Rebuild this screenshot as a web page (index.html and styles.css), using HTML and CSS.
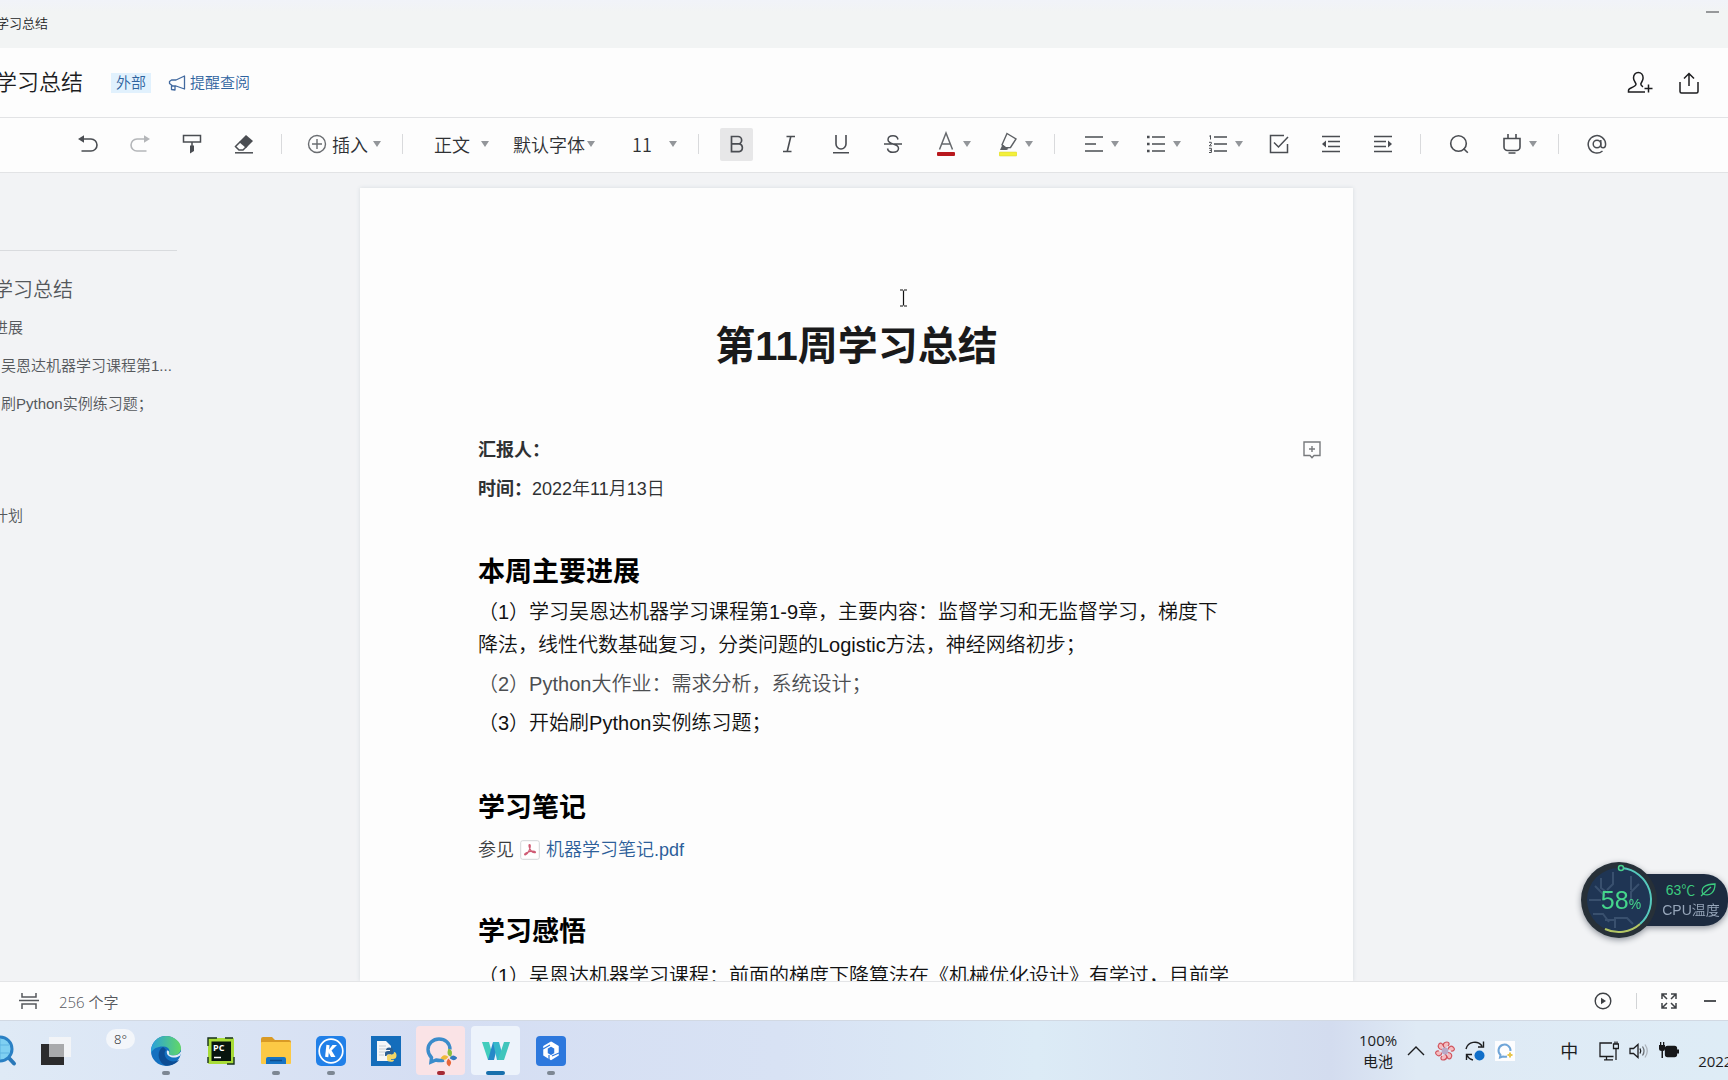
FILE: index.html
```html
<!DOCTYPE html>
<html lang="zh-CN">
<head>
<meta charset="utf-8">
<title>第11周学习总结</title>
<link rel="stylesheet" href="styles.css">
</head>
<body>
<svg class="defs" aria-hidden="true">
  <symbol id="caret" viewBox="0 0 8 6"><path d="M0 0h8L4 6z" fill="#93969a"/></symbol>
</svg>

<div class="titlebar">
  <span class="titlebar-text">学习总结</span>
  <button class="minimize" aria-label="最小化"></button>
</div>

<header class="header">
  <h1 class="doc-name">学习总结</h1>
  <span class="badge">外部</span>
  <button class="remind">
    <svg width="18" height="18" viewBox="0 0 18 18" fill="none" stroke="#41699f" stroke-width="1.3" stroke-linejoin="round"><path d="M16.500 2v13L8 12H4.500L3.500 11l-2-1.500V7.500L3.500 6H8zM3.500 11v4.500l3.500.5v-4"/></svg>
    <span>提醒查阅</span>
  </button>
  <div class="header-actions">
    <button class="action" aria-label="添加成员">
      <svg width="26" height="24" viewBox="0 0 26 24" fill="none" stroke="#1c1d1f" stroke-width="1.500"><path d="M18 21H1.500v-1.500c0-1.500 1-2 3-2.800 3-1.200 4.500-2 4.500-3.700 0-1-2.500-3-2.500-6 0-3.300 2-5.500 4.800-5.500s4.800 2.200 4.800 5.500c0 3-2.300 5-2.300 6 0 1.200.8 2 2.200 2.800M21.500 13.500v8M17.500 17.500h8"/></svg>
    </button>
    <button class="action" aria-label="分享">
      <svg width="22" height="24" viewBox="0 0 22 24" fill="none" stroke="#1c1d1f" stroke-width="1.500"><path d="M2 11v9.500c0 1 .7 1.500 1.500 1.500h15c.8 0 1.500-.5 1.500-1.500V11M11 15V3M6 7.500l5-5 5 5"/></svg>
    </button>
  </div>
</header>

<div class="toolbar" role="toolbar">
  <div class="group">
    <button class="tool" aria-label="撤销"><svg width="20" height="18" viewBox="0 0 20 18" fill="none" stroke="#4a4d52" stroke-width="1.600"><path d="M4 4h9a6 6 0 0 1 0 12H3.500"/><path d="M0 4l6-3.800v7.600z" fill="#4a4d52" stroke="none"/></svg></button>
    <button class="tool" aria-label="重做"><svg width="20" height="18" viewBox="0 0 20 18" fill="none" stroke="#b4b6b9" stroke-width="1.600"><path d="M16 4H7a6 6 0 0 0 0 12h9.500"/><path d="M20 4l-6-3.800v7.600z" fill="#b4b6b9" stroke="none"/></svg></button>
    <button class="tool" aria-label="格式刷"><svg width="20" height="20" viewBox="0 0 20 20" fill="none" stroke="#4a4d52" stroke-width="1.500"><path d="M1.500 1.500h17v6.500h-17zM10 8v4"/><path d="M8 11.500h4V17l-4 2.500z" fill="#4a4d52" stroke="none"/></svg></button>
    <button class="tool" aria-label="清除格式"><svg width="20" height="20" viewBox="0 0 20 20" fill="none" stroke="#4a4d52" stroke-width="1.500"><path d="M6 8l-4.500 4.500 3.500 3.500h4l4-4"/><path d="M12 1l7 6-7 7-7-6z" fill="#4a4d52" stroke="none"/><path d="M1 18.800h18"/></svg></button>
  </div>
  <span class="sep"></span>
  <div class="group">
    <button class="drop drop-text"><svg width="20" height="20" viewBox="0 0 20 20" fill="none" stroke="#6a6d71" stroke-width="1.400"><circle cx="10" cy="10" r="8.500"/><path d="M10 5v10M5 10h10"/></svg><span>插入</span><svg width="8" height="6"><use href="#caret"/></svg></button>
  </div>
  <span class="sep"></span>
  <div class="group fields">
    <label class="field field-style"><select aria-label="段落样式"><option>正文</option></select><svg width="8" height="6"><use href="#caret"/></svg></label>
    <label class="field field-font"><select aria-label="字体"><option>默认字体</option></select><svg width="8" height="6"><use href="#caret"/></svg></label>
    <label class="field field-size"><select aria-label="字号"><option>11</option></select><svg width="8" height="6"><use href="#caret"/></svg></label>
  </div>
  <span class="sep"></span>
  <div class="group">
    <button class="tool tool-on" aria-label="加粗" aria-pressed="true"><svg width="20" height="20" viewBox="0 0 20 20" fill="none" stroke="#4a4d52" stroke-width="1.700"><path d="M4.500 2.500h6.500a3.500 3.500 0 0 1 0 7.300H4.500zM4.500 9.800h7.500a4 4 0 0 1 0 7.900H4.500z"/></svg></button>
    <button class="tool" aria-label="斜体"><svg width="20" height="20" viewBox="0 0 20 20" fill="none" stroke="#4a4d52" stroke-width="1.600"><path d="M7.500 2.500H16M4 17.500h8.500M11.800 2.500l-3.600 15"/></svg></button>
    <button class="tool" aria-label="下划线"><svg width="20" height="20" viewBox="0 0 20 20" fill="none" stroke="#4a4d52" stroke-width="1.600"><path d="M5 1v9a5 5 0 0 0 10 0V1M2 18.800h16"/></svg></button>
    <button class="tool" aria-label="删除线"><svg width="20" height="20" viewBox="0 0 20 20" fill="none" stroke="#4a4d52" stroke-width="1.500"><path d="M15 5.500C14.500 3 12.500 1.800 10 1.800c-3 0-5 1.500-5 4 0 2.200 2 3.200 5 4.200 3.500 1 5.500 2 5.500 4.300 0 2.500-2.300 4-5.500 4-3 0-5-1.300-5.500-3.800M1 10h18"/></svg></button>
    <button class="drop" aria-label="文字颜色"><svg width="18" height="26" viewBox="0 0 18 26" fill="none"><path d="M2.500 18.500L9 2l6.500 16.500M5 13h8" stroke="#66696d" stroke-width="1.500"/><rect y="21" width="18" height="4" rx="1" fill="#b8181d"/></svg><svg width="8" height="6"><use href="#caret"/></svg></button>
    <button class="drop" aria-label="突出显示"><svg width="18" height="26" viewBox="0 0 18 26" fill="none"><path d="M8 2.500l9 5.500-5.500 8.500-5 .3-3.500-3z" stroke="#5d6064" stroke-width="1.400"/><path d="M3.500 13.500l6 4.500-2 1H1z" fill="#5d6064"/><rect y="21" width="18" height="4" rx="1" fill="#f3f03a" stroke="#d6d030" stroke-width=".5"/></svg><svg width="8" height="6"><use href="#caret"/></svg></button>
  </div>
  <span class="sep"></span>
  <div class="group">
    <button class="drop" aria-label="对齐"><svg width="18" height="18" viewBox="0 0 18 18" stroke="#4a4d52" stroke-width="1.600"><path d="M0 2h18M0 9h11M0 16h18"/></svg><svg width="8" height="6"><use href="#caret"/></svg></button>
    <button class="drop" aria-label="项目符号"><svg width="18" height="18" viewBox="0 0 18 18" stroke="#4a4d52" stroke-width="1.600"><path d="M5 2h13M5 9h13M5 16h13"/><path d="M0 2h2.600M0 9h2.600M0 16h2.600" stroke-width="2.600"/></svg><svg width="8" height="6"><use href="#caret"/></svg></button>
    <button class="drop" aria-label="编号"><svg width="18" height="18" viewBox="0 0 18 18" fill="none" stroke="#4a4d52" stroke-width="1.600"><path d="M5 2h13M5 9h13M5 16h13"/><path d="M.3 1.200l1.200-.7v4M0 7.300h2.300v1.500L.2 10.800h2.600M0 13.300h2.400v4.200H0M.6 15.400h1.800" stroke-width="1"/></svg><svg width="8" height="6"><use href="#caret"/></svg></button>
    <button class="tool" aria-label="待办"><svg width="20" height="20" viewBox="0 0 20 20" fill="none" stroke="#4a4d52" stroke-width="1.500"><path d="M15 1.500H1.500v17h17V10M5 8.500l4.500 4.500L19 3"/></svg></button>
    <button class="tool" aria-label="减少缩进"><svg width="20" height="20" viewBox="0 0 20 20" stroke="#4a4d52" stroke-width="1.600"><path d="M1 2.500h18M7 7.500h12M7 12.500h12M1 17.500h18"/><path d="M5 6.500v7L1 10z" fill="#4a4d52" stroke="none"/></svg></button>
    <button class="tool" aria-label="增加缩进"><svg width="20" height="20" viewBox="0 0 20 20" stroke="#4a4d52" stroke-width="1.600"><path d="M1 2.500h18M1 7.500h12M1 12.500h12M1 17.500h18"/><path d="M15 6.500v7l4-3.500z" fill="#4a4d52" stroke="none"/></svg></button>
  </div>
  <span class="sep"></span>
  <div class="group">
    <button class="tool" aria-label="查找"><svg width="20" height="20" viewBox="0 0 20 20" fill="none" stroke="#4a4d52" stroke-width="1.600"><circle cx="9.500" cy="9.500" r="7.800"/><path d="M14.500 14.500l4.300 4.300"/></svg></button>
    <button class="drop" aria-label="插件"><svg width="18" height="22" viewBox="0 0 18 22" fill="none" stroke="#4a4d52" stroke-width="1.600"><path d="M1 5.500h16V14a3.500 3.500 0 0 1-3.500 3.500h-9A3.500 3.500 0 0 1 1 14zM5 1v4M13 1v4M5.500 20h7"/></svg><svg width="8" height="6"><use href="#caret"/></svg></button>
  </div>
  <span class="sep"></span>
  <div class="group">
    <button class="tool" aria-label="提及"><svg width="20" height="20" viewBox="0 0 20 20" fill="none" stroke="#4a4d52" stroke-width="1.500"><circle cx="10" cy="10" r="3.800"/><path d="M13.800 6v5.500c0 1.500 1 2.300 2.300 2.300 1.500 0 2.500-1.300 2.500-3.800A8.700 8.700 0 1 0 15.500 17"/></svg></button>
  </div>
</div>

<main class="workspace">
  <nav class="outline">
    <a class="outline-title" href="#top">学习总结</a>
    <a href="#progress">进展</a>
    <a class="outline-sub" href="#progress">吴恩达机器学习课程第1...</a>
    <a class="outline-sub" href="#progress">刷Python实例练习题；</a>
    <a class="outline-gap" href="#plan">计划</a>
  </nav>
  <article class="page" id="top">
    <h2 class="page-title">第11周学习总结</h2>
    <div class="meta">
      <p><b>汇报人：</b></p>
      <button class="comment" aria-label="添加评论"><svg width="18" height="18" viewBox="0 0 18 18" fill="none" stroke="#77797c" stroke-width="1.400"><path d="M1 1h16v13.500h-6L9 16.800l-2-2.300H1zM9 5v6M6 8h6"/></svg></button>
    </div>
    <p class="meta"><b>时间：</b>2022年11月13日</p>
    <h3 id="progress">本周主要进展</h3>
    <p class="body">（1）学习吴恩达机器学习课程第1-9章，主要内容：监督学习和无监督学习，梯度下降法，线性代数基础复习，分类问题的Logistic方法，神经网络初步；</p>
    <p class="body body-soft">（2）Python大作业：需求分析，系统设计；</p>
    <p class="body">（3）开始刷Python实例练习题；</p>
    <h3>学习笔记</h3>
    <p class="attach">参见<svg width="20" height="20" viewBox="0 0 20 20" fill="none"><rect x=".7" y=".7" width="18.600" height="18.600" rx="2" fill="#fff" stroke="#d3d5d8"/><path d="M9.500 4.500c1.200 0 .8 3 0 5-1 2.500-3 5-4.300 5.300-1.500 0 0-2 3-2.800 2.800-.8 6.500-.8 7.200 0 .6 1.200-2.500 1-4.200-1C9.500 9 8.300 4.500 9.500 4.500z" stroke="#cf5b74" stroke-width="1.200"/></svg><a href="#pdf">机器学习笔记.pdf</a></p>
    <h3>学习感悟</h3>
    <p class="body">（1）吴恩达机器学习课程：前面的梯度下降算法在《机械优化设计》有学过，目前学</p>
  </article>
</main>

<footer class="status">
  <svg width="20" height="18" viewBox="0 0 20 18" fill="none" stroke="#55585c" stroke-width="1.500"><path d="M3 1v4h14V1M0 8.500h20M3 17v-5h14v5"/></svg>
  <span class="count">256 个字</span>
  <div class="status-right">
    <button class="tiny" aria-label="演示"><svg width="18" height="18" viewBox="0 0 18 18" fill="none" stroke="#3e4145" stroke-width="1.400"><circle cx="9" cy="9" r="7.800"/><path d="M7 5.800v6.400l5-3.200z" fill="#3e4145" stroke="none"/></svg></button>
    <span class="status-sep"></span>
    <button class="tiny" aria-label="全屏"><svg width="16" height="16" viewBox="0 0 16 16" fill="none" stroke="#3e4145" stroke-width="1.500"><path d="M1 6V1h5M1 1l5 5M10 1h5v5M15 1l-5 5M1 10v5h5M1 15l5-5M15 10v5h-5M15 15l-5-5"/></svg></button>
    <button class="tiny" aria-label="缩小"><svg width="12" height="10" viewBox="0 0 12 10"><path d="M0 5h12" stroke="#3e4145" stroke-width="1.800"/></svg></button>
  </div>
</footer>

<div class="taskbar">
  <div class="apps">
    <button class="app app-cut" aria-label="搜索"><svg width="32" height="32" viewBox="0 0 32 32"><path d="M23 22l6 6.500" stroke="#2a78b8" stroke-width="4" stroke-linecap="round"/><circle cx="15" cy="14" r="12" fill="#7fd0f2" stroke="#2a80c4" stroke-width="3"/><path d="M15 4v20M6 10h18M6 18h18" stroke="#5fb4e2"/></svg></button>
    <button class="app" aria-label="任务视图"><svg width="32" height="32" viewBox="0 0 32 32"><rect x="1" y="9" width="23" height="21" fill="#2b2b2c"/><rect x="9" y="2" width="22" height="20" fill="#f3f4f6" opacity=".92"/><path d="M9 9h15v13H9z" fill="#a9aaac"/></svg></button>
    <button class="app weather"><span>8°</span></button>
    <button class="app running" aria-label="Edge"><svg width="32" height="32" viewBox="0 0 32 32"><defs><linearGradient id="eg" x1="0" x2="1"><stop offset="0" stop-color="#2aa0dc"/><stop offset="1" stop-color="#62d866"/></linearGradient></defs><circle cx="16" cy="16" r="15" fill="#1470c0"/><path d="M1 15C2 7 8 1 16 1s15 6 15 12c0 5-4 7.500-8 7.500-3 0-4.500-1-4-2.500 1.500-3-.5-6-5-6.500C9 11 3 13 1 18z" fill="url(#eg)"/><path d="M13 12c-6 3-6 13 1 18 5 2 12-1 15-5-4 2-9 2-12-1s-3-7-1-9c-1-1.500-2-2.500-3-3z" fill="#0d4d94"/><path d="M31 18c0 3-4 5-8 4.500-5-.5-7-4-6-7 1.500-.5 2.500 1 2 2.500-.5 1.500 1 2.500 4 2.500s6-1 8-4z" fill="#e4edf7"/></svg></button>
    <button class="app" aria-label="PyCharm"><svg width="28" height="28" viewBox="0 0 28 28"><rect x="1" y="1" width="26" height="26" rx="1" fill="#a8dc38"/><path d="M1 9V1h9M18 1h8M27 20v7h-7M1 20v6" fill="none" stroke="#16301b" stroke-width="1.400"/><rect x="4.500" y="4.500" width="19.500" height="19.500" fill="#08150e"/><text x="6" y="14" class="pc">PC</text><path d="M7 20.500h7" stroke="#fff" stroke-width="1.500"/></svg></button>
    <button class="app running" aria-label="文件资源管理器"><svg width="32" height="32" viewBox="0 0 32 32"><path d="M1 4q0-2 2-2h9l3 3h14q2 0 2 2v7H1z" fill="#d99a25"/><rect x="1" y="7" width="30" height="22" rx="1" fill="#fcc945"/><path d="M6 29v-5q0-2 2-2h16q2 0 2 2v5z" fill="#1673c4"/><path d="M10 25.500h12" stroke="#0c4c8c" stroke-width="1.500"/></svg></button>
    <button class="app running" aria-label="酷狗音乐"><svg width="30" height="30" viewBox="0 0 30 30"><rect width="30" height="30" rx="5" fill="#2180e8"/><circle cx="15" cy="15" r="11.800" fill="none" stroke="#fff" stroke-width="1.700"/><path d="M12 9l-1.300 12" fill="none" stroke="#fff" stroke-width="3.200"/><path d="M16.500 9H21l-5.500 5.500L19.500 21H15l-3-6z" fill="#fff"/></svg></button>
    <button class="app" aria-label="Python"><svg width="30" height="30" viewBox="0 0 30 30"><rect width="30" height="30" fill="#146dbb"/><path d="M6 5h9l5 5v15H6z" fill="#f4f6f8"/><path d="M8 10h7M8 13h7M8 16h6M8 19h5" stroke="#c6cdd4"/><path d="M14 20v-3q0-2 3-2h2v-1h-4q0-2.500 3-2.500 4 0 4 2.500v3q0 1.500-2 1.500h-3q-1.500 0-1.500 1.500z" fill="#2c5f93"/><path d="M16 20q0-1.500 1.500-1.500h3q2.500 0 2.500-2.500 2.500 0 2.500 3.500T22 23h-2v.8h3q0 2-3 2-4 0-4-2.500z" fill="#f4d565"/></svg></button>
    <button class="app app-alert running" aria-label="企业微信"><svg width="32" height="32" viewBox="0 0 32 32" fill="none"><path d="M25 14.500C25 8 20 4 14 4S3 8.500 3 14.500c0 3.500 1.500 6 3.500 8L6 27l5-2c3 .8 5.500.7 8 0" stroke="#3b8ccb" stroke-width="3.400"/><path d="M24 15q3 1 1.500 5.500-3-1-1.500-5.500z" fill="#8bbf3d" stroke="#8bbf3d" stroke-width="2"/><path d="M31 23q-2 2.500-5 0 2-3 5 0z" fill="#3279bd" stroke="#3279bd" stroke-width="2"/><path d="M24 30q-2.500-2-.5-5 3 2 .5 5z" fill="#e8663a" stroke="#e8663a" stroke-width="2"/><path d="M17 23q2-3 5-1-2 3-5 1z" fill="#efb93b" stroke="#efb93b" stroke-width="2"/></svg></button>
    <button class="app app-active running" aria-label="WPS文档"><svg width="30" height="22" viewBox="0 0 30 22"><path d="M1 2h7l5 18H7z" fill="#42cdbd"/><path d="M13 20L17.500 2h-5.500L7 20z" fill="#2688c8"/><path d="M12 2h6l5 18h-7z" fill="#36b7ca"/><path d="M23 20L29 2h-6l-6 18z" fill="#40c5bc"/></svg></button>
    <button class="app running" aria-label="钉盘"><svg width="30" height="30" viewBox="0 0 30 30"><rect width="30" height="30" rx="4" fill="#2d78dd"/><path d="M15 8l5.500 3.300v7L15 21.700l-5.500-3.400v-7z" fill="none" stroke="#fff" stroke-width="4.500"/><path d="M7 13l7-4M13 25v-6M16 20l7-3" stroke="#2d78dd" stroke-width="1.200"/></svg></button>
  </div>
  <div class="tray">
    <div class="battery"><span>100%</span><span>电池</span></div>
    <svg width="18" height="10" viewBox="0 0 18 10" fill="none" stroke="#1c1d1f" stroke-width="1.400"><path d="M1 9l8-8 8 8"/></svg>
    <svg width="20" height="20" viewBox="0 0 20 20" fill="none" stroke="#d0555f" stroke-width="1.200"><g id="petals"><path d="M10 7C7 5 8 1 12 1c2 0 3 2 1 4" fill="#f5bcc0"/><path d="M13 8.500C13.500 5 17 4 19 7c1 2-.5 3.500-3 3" fill="#f5bcc0"/><path d="M13 11.500c3 0 5 3 3 5.500-1.500 1.700-3.500.8-4-1.500" fill="#f5bcc0"/><path d="M10 13c3 2 2 6-2 6-2 0-3-2-1-4" fill="#f5bcc0"/><path d="M7 11.500C6.500 15 3 16 1 13c-1-2 .5-3.500 3-3" fill="#f5bcc0"/><path d="M7 8.500C4 8.500 2 5.500 4 3c1.500-1.700 3.500-.8 4 1.500" fill="#f5bcc0"/></g><circle cx="10" cy="10" r="3.400" fill="#b9a9c6" stroke="none"/></svg>
    <svg width="20" height="20" viewBox="0 0 20 20" fill="none" stroke="#1c1d1f" stroke-width="1.400"><path d="M1 8a9 9 0 0 1 16-3M18.500.5v5.500H13M1.500 19v-5.500H7M2 14.500a9 9 0 0 0 6 4.500"/><circle cx="14.500" cy="14.500" r="5" fill="#0f6ec9" stroke="none"/></svg>
    <svg width="20" height="20" viewBox="0 0 20 20" fill="none"><rect width="20" height="20" fill="#fdfdfe"/><path d="M15.500 10a6 6 0 1 0-10 4L5 16.500l3-1q2 .5 4 0" stroke="#6fa5d8" stroke-width="2"/><path d="M15 11.500v5M12.500 14h5" stroke="#e8c64e" stroke-width="2"/></svg>
    <span class="ime">中</span>
    <svg width="20" height="20" viewBox="0 0 20 20" fill="none" stroke="#1c1d1f" stroke-width="1.300"><path d="M13 2H1v13.500h13.500M5 18.800h9M7.500 15.500v3M17 8v11M14.500 3h5v4.500h-5zM16 .5V3M18 .5V3"/></svg>
    <svg width="20" height="18" viewBox="0 0 20 18" fill="none" stroke="#1c1d1f" stroke-width="1.300"><path d="M1 6.500h3.500L9 2.500v13l-4.500-4H1zM11 6.500q1.500 2.500 0 5"/><path d="M13.500 4.500q3 4.500 0 9" stroke="#6c7177"/><path d="M16 2.500q4.500 6.500 0 13" stroke="#adb4bc"/></svg>
    <svg width="20" height="18" viewBox="0 0 20 18"><path d="M0 3h6v4q0 2-2 2v7H2.500V9Q0 9 0 7zM1 0h1.300v3H1zM4 0h1.300v3H4z" fill="#17181a"/><rect x="6.500" y="4.500" width="11" height="10" rx="2" fill="#17181a" stroke="#17181a" stroke-width="1.300"/><path d="M19 7.500v4" stroke="#17181a" stroke-width="2"/></svg>
    <span class="date">2022</span>
  </div>
</div>

<svg class="cursor" width="9" height="18" viewBox="0 0 9 18" fill="none" stroke="#111" stroke-width="1.200"><path d="M1 1h3M5 1h3M1 17h3M5 17h3M4.500 1.500v15"/></svg>

<aside class="monitor">
  <div class="dial">
    <svg class="dial-art" width="76" height="76" viewBox="0 0 76 76" fill="none"><circle cx="38" cy="38" r="38" fill="#273038"/><circle cx="38" cy="38" r="32" fill="#1f3554"/><path d="M14 24l10 10M20 16v10l8 6M32 10v12l-6 6M50 14v14M58 22l-8 8v10M8 38h12M12 52h10l6 8M34 66v-10h12l6 6M24 58h10" stroke="#39506e" stroke-width="2"/><path d="M41 6a32 32 0 0 1 18 56" stroke="#56c9bd" stroke-width="2"/><path d="M59 62a32 32 0 0 1-35 5" stroke="#b3c664" stroke-width="2"/><circle cx="40" cy="6" r="2.500" fill="#1f3554" stroke="#49d28b" stroke-width="1.500"/></svg>
    <span class="load">58<small>%</small></span>
  </div>
  <div class="temp">
    <span class="degree">63℃ <svg width="16" height="14" viewBox="0 0 16 14" fill="none" stroke="#3ccb7f" stroke-width="1.300"><path d="M1 13L11 4M3 11C0 5 5 1 15 1c0 8-5 13-12 10z"/></svg></span>
    <span>CPU温度</span>
  </div>
</aside>
</body>
</html>
```
FILE: styles.css
```css
* { box-sizing: border-box; }

body {
  margin: 0;
  height: 100vh;
  display: flex;
  flex-direction: column;
  position: relative;
  overflow: hidden;
  background: #f2f3f5;
  color: #1c1d1f;
  font-family: "Liberation Sans", "Noto Sans CJK SC", sans-serif;
  font-weight: 350;
  font-size: 15px;
}

button, select {
  border: 0;
  padding: 0;
  background: none;
  color: inherit;
  font: inherit;
}

h1, h2, h3, p { margin: 0; }
b { font-weight: 700; }
a { color: inherit; text-decoration: none; }
svg { display: block; flex: none; }
.defs { position: absolute; width: 0; height: 0; }

/* Window title */
.titlebar {
  flex: none;
  height: 48px;
  display: flex;
  justify-content: space-between;
  align-items: center;
  padding-right: 9px;
  background: linear-gradient(#f1f3f9, #f2f4f4 12px);
}
.titlebar-text { margin-left: -4px; font-size: 13px; line-height: 20px; }
.minimize { width: 13px; height: 2px; margin-bottom: 24px; background: #96989a; }

/* Document header */
.header {
  flex: none;
  height: 70px;
  display: flex;
  align-items: center;
  background: #fdfdfd;
  border-bottom: 1px solid #e2e3e5;
}
.doc-name { margin-left: -5px; font-size: 22px; line-height: 32px; font-weight: 350; }
.badge {
  margin-left: 28px;
  padding: 0 5px;
  line-height: 20px;
  background: #e1f1fd;
  color: #2f639f;
}
.remind {
  display: flex;
  align-items: center;
  gap: 4px;
  margin-left: 17px;
  line-height: 20px;
  color: #2f639f;
}
.header-actions { display: flex; align-items: center; gap: 25px; margin-left: auto; padding-right: 28px; }

/* Toolbar */
.toolbar {
  flex: none;
  height: 55px;
  display: flex;
  align-items: center;
  padding: 0 0 2px 71px;
  background: #fdfdfd;
  border-bottom: 1px solid #e2e3e5;
  font-family: "Noto Sans CJK SC", sans-serif;
  font-size: 18px;
  color: #2f3134;
}
.group { display: flex; align-items: center; gap: 19px; }
.sep { flex: none; width: 1px; height: 20px; margin: 0 21px; background: #d9dadc; }
.tool {
  display: grid;
  place-items: center;
  width: 33px;
  height: 33px;
  border-radius: 2px;
}
.tool-on { background: #e7e7e8; }
.drop { display: flex; align-items: center; gap: 8px; padding-left: 9px; height: 33px; }
.drop-text { gap: 5px; padding-left: 4px; line-height: 28px; }
.fields { gap: 24px; padding-left: 10px; }
.field { display: flex; align-items: center; line-height: 28px; }
.field select { flex: 1; min-width: 0; appearance: none; }
.field-style { width: 55px; }
.field-font { width: 82px; }
.field-size { width: 58px; padding-left: 13px; }

/* Workspace */
.workspace {
  flex: 1;
  min-height: 0;
  display: grid;
  grid-template-columns: 360px 1fr 375px;
  overflow: hidden;
}
.outline {
  display: flex;
  flex-direction: column;
  align-items: flex-start;
  gap: 16px;
  width: 177px;
  margin-top: 77px;
  padding-top: 24px;
  border-top: 1px solid #d9dbde;
  color: #55585c;
  line-height: 22px;
  white-space: nowrap;
}
.outline a { margin-left: -7px; }
.outline .outline-title { margin-bottom: -4px; font-size: 20px; line-height: 30px; }
.outline .outline-sub { margin-left: 1px; }
.outline .outline-gap { margin-top: 74px; }

.page {
  margin-top: 15px;
  padding: 130px 118px 0;
  background: #fdfdfd;
  box-shadow: 0 0 4px #d5dadf;
  overflow: hidden;
}
.page-title {
  font-size: 40px;
  line-height: 56px;
  text-align: center;
  color: #1a1a1b;
  margin-bottom: 61px;
}
.meta {
  display: flex;
  justify-content: space-between;
  font-size: 18px;
  line-height: 30px;
  margin-bottom: 9px;
  color: #2f3133;
}
p.meta { justify-content: flex-start; }
.comment { margin-right: -86px; }
.page h3 {
  font-size: 27px;
  line-height: 40px;
  margin: 48px 0 4px;
  color: #000;
}
.body { font-size: 20px; line-height: 33px; margin-bottom: 6px; color: #111; }
.body-soft { color: #4c4e51; }
.attach { display: flex; align-items: center; gap: 6px; font-size: 18px; line-height: 36px; color: #3a3c3f; }
.attach a { color: #2d5f9a; }
.page .attach + h3 { margin: 44px 0 8px; }

/* Status bar */
.status {
  flex: none;
  height: 39px;
  display: flex;
  align-items: center;
  gap: 20px;
  padding: 0 9px 0 19px;
  border-top: 1px solid #e4e5e7;
  background: #fdfdfd;
  color: #55585c;
  font-family: "Open Sans", "Noto Sans CJK SC", sans-serif;
}
.status-right { display: flex; align-items: center; gap: 21px; margin-left: auto; }
.status-sep { width: 1px; height: 16px; background: #d2d4d6; }
.tiny { padding: 0 3px; }

/* Taskbar */
.taskbar {
  flex: none;
  height: 60px;
  display: flex;
  justify-content: space-between;
  background: linear-gradient(90deg, #dfeaf6, #d5def3 25%, #d8e2f4 45%, #dcebf6 60%, #d3dcef 77%, #dfeaf5 82%, #deecf6);
  border-top: 1px solid #d2d9e3;
}
.apps { display: flex; align-items: center; gap: 6px; }
.app {
  position: relative;
  display: grid;
  place-items: center;
  width: 49px;
  height: 49px;
  border-radius: 4px;
}
.app-cut { margin-left: -24px; }
.weather { align-items: start; justify-items: end; font-family: "Open Sans", sans-serif; }
.weather span { margin-top: 3px; padding: 0 8px; border-radius: 10px; background: #f3f6fa; line-height: 20px; font-size: 13px; }
.pc { font: 700 9px "Open Sans", sans-serif; fill: #fff; }
.running::after {
  content: "";
  position: absolute;
  bottom: 0;
  width: 8px;
  height: 4px;
  border-radius: 2px;
  background: #7d8793;
}
.app-alert { background: #fae3e6; }
.app-alert::after { background: #a52a35; }
.app-active { background: #edf3fb; }
.app-active::after { width: 19px; background: #1870ad; }

.tray {
  display: flex;
  align-items: center;
  gap: 10px;
  width: 369px;
  overflow: hidden;
  font-family: "Open Sans", "Noto Sans CJK SC", sans-serif;
  font-weight: 400;
}
.battery { display: flex; flex-direction: column; align-items: center; width: 40px; line-height: 21px; }
.ime { margin: 0 11px 0 35px; font-size: 18px; line-height: 20px; }
.date { margin: 20px 0 0 9px; line-height: 20px; }

/* Pointer and hardware monitor float above the document */
.cursor { position: absolute; left: 899px; top: 289px; }
.monitor {
  position: absolute;
  right: 0;
  top: 862px;
  display: flex;
  align-items: center;
  color: #97a6ba;
  filter: drop-shadow(0 2px 3px #8b9098);
}
.dial { position: relative; z-index: 1; display: grid; place-items: center; width: 76px; height: 76px; }
.dial-art { grid-area: 1 / 1; }
.load { grid-area: 1 / 1; z-index: 1; font-size: 25px; color: #45d68c; margin-left: 4px; }
.load small { font-size: 14px; }
.temp {
  display: flex;
  flex-direction: column;
  align-items: center;
  justify-content: center;
  width: 88px;
  height: 52px;
  margin-left: -17px;
  padding-left: 14px;
  border-radius: 0 24px 24px 0;
  background: #1d2b40;
  font-size: 14px;
  line-height: 20px;
  white-space: nowrap;
}
.degree { display: flex; align-items: center; gap: 5px; color: #3ccb7f; }
```
